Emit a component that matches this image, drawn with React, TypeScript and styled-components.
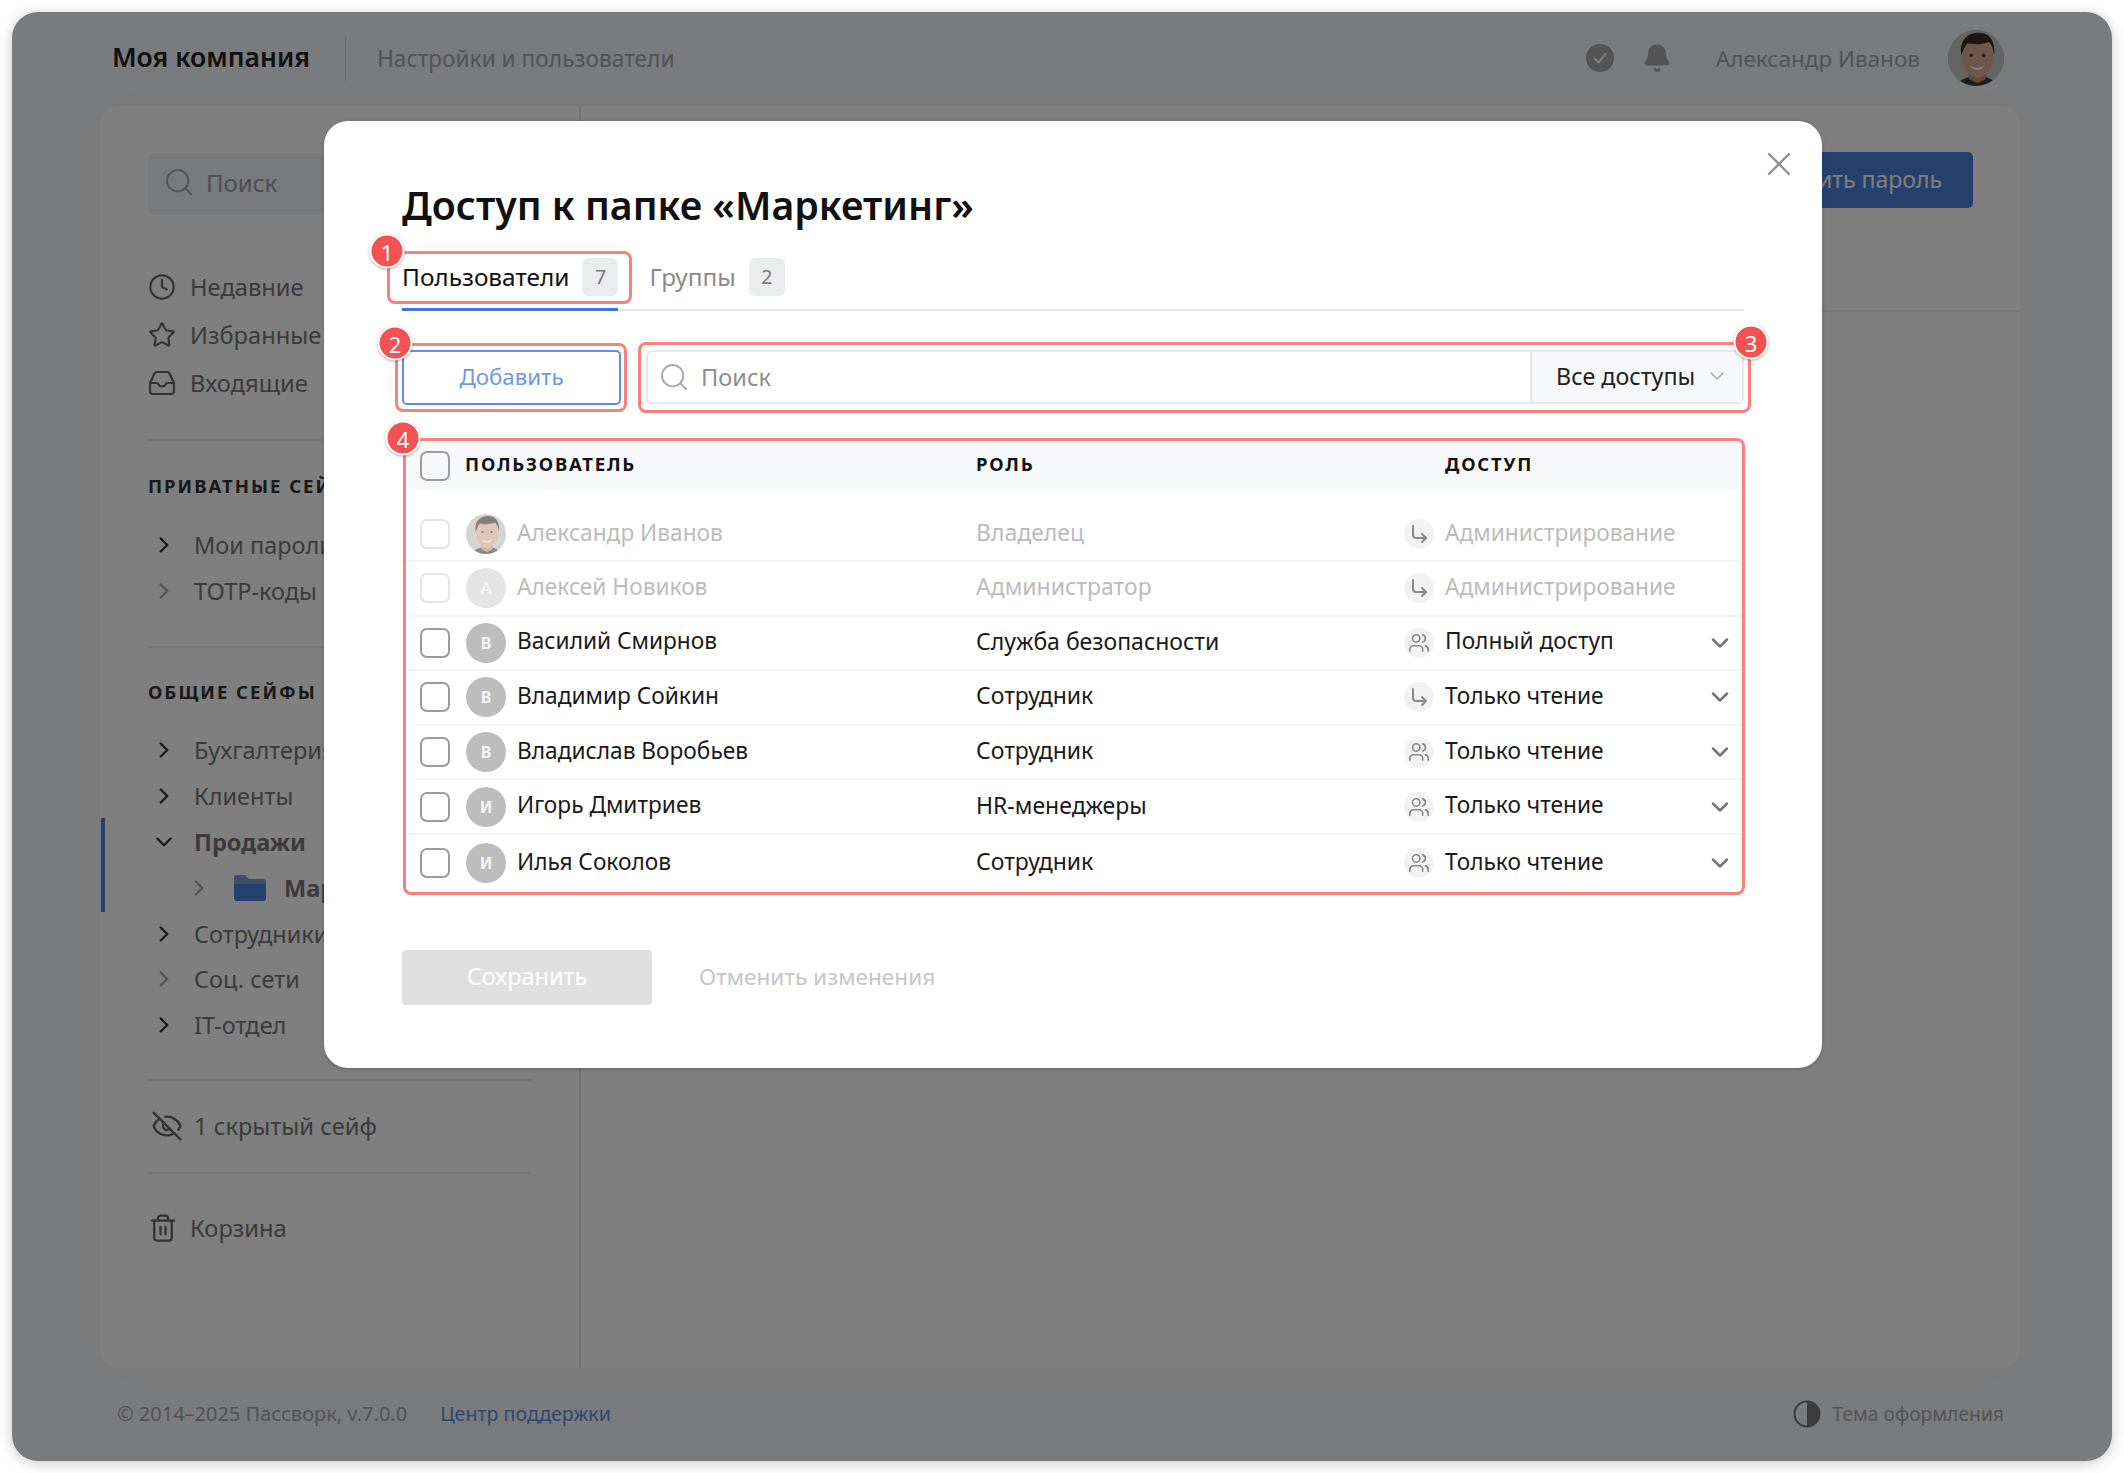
import React from 'react'
import styled, { createGlobalStyle } from 'styled-components'
import { Search, Clock, Star, ChevronRight, ChevronDown, X, Bell, Users, Trash2, EyeOff } from 'lucide-react'

const GlobalStyle = createGlobalStyle`
  html, body { margin: 0; background: #fff; }
  body { padding: 12px; width: 2124px; height: 1473px; box-sizing: border-box; overflow: hidden; font-family: "Noto Sans", "Open Sans", sans-serif; }
  * { box-sizing: border-box; }
`

const Window = styled.div`
  position: relative;
  width: 2100px;
  height: 1449px;
  border-radius: 26px;
  background: #f5f6f8;
  box-shadow: 0 2px 14px rgba(0, 0, 0, 0.22);
  overflow: hidden;
  display: flex;
  flex-direction: column;
`

const Header = styled.header`
  height: 94px;
  flex: none;
  display: flex;
  align-items: center;
  padding: 0 108px 2px 100px;
`

const Brand = styled.div`
  font-size: 26.5px;
  font-weight: 600;
  color: #222;
  padding-right: 35px;
  height: 46px;
  line-height: 45px;
  border-right: 1px solid #d8d9dc;
`

const Crumb = styled.div`
  font-size: 22.7px;
  color: #a4a6aa;
  margin-left: 31px;
  flex: 1;
`

const HeaderIcon = styled.div`
  width: 30px;
  height: 30px;
  display: flex;
  align-items: center;
  justify-content: center;
  margin-right: 27px;
`

const UserName = styled.div`
  font-size: 22.5px;
  color: #a4a6aa;
  margin: 0 28px 0 17px;
`

const Panel = styled.div`
  height: 1262px;
  flex: none;
  margin: 0 92px 0 88px;
  background: #fefefe;
  border-radius: 18px;
  display: flex;
  box-shadow: 0 0 50px rgba(0, 0, 0, 0.015);
  overflow: hidden;
`

const Sidebar = styled.aside`
  width: 481px;
  flex: none;
  padding: 47px 48px 0 48px;
  border-right: 2px solid #e4e5e7;
  position: relative;
`

const SideSearch = styled.div`
  height: 62px;
  border-radius: 6px;
  background: #f3f4f6;
  display: flex;
  align-items: center;
  padding: 0 0 4px 15px;
  gap: 11px;
  font-size: 24px;
  color: #9a9ca0;
  margin-bottom: 48px;
`

const NavItem = styled.div<{ $gap?: number; $indent?: number }>`
  height: 48px;
  display: flex;
  align-items: center;
  gap: ${(p) => p.$gap ?? 14}px;
  padding-left: ${(p) => p.$indent ?? 0}px;
  font-size: 23.7px;
  color: #777;
`

const SideDivider = styled.div<{ $top: number; $bottom: number }>`
  height: 2px;
  background: #e9eaec;
  margin: ${(p) => p.$top}px 0 ${(p) => p.$bottom}px;
`

const SectionTitle = styled.div<{ $bottom: number }>`
  font-size: 18.5px;
  line-height: 24px;
  font-weight: 700;
  letter-spacing: 2px;
  color: #333;
  white-space: nowrap;
  margin-bottom: ${(p) => p.$bottom}px;
`

const TreeRow = styled.div<{ $strong?: boolean }>`
  height: 45.8px;
  display: flex;
  align-items: center;
  font-size: 23.5px;
  white-space: nowrap;
  color: #777;
  font-weight: ${(p) => (p.$strong ? 700 : 400)};
`

const TreeChevron = styled.span<{ $muted?: boolean; $indent?: number }>`
  width: 32px;
  margin-left: ${(p) => p.$indent ?? 0}px;
  margin-right: ${(p) => (p.$indent ? 19 : 14)}px;
  flex: none;
  display: flex;
  justify-content: center;
  color: ${(p) => (p.$muted ? '#aaa' : '#333')};
`

const FolderName = styled.span`
  margin-left: 18px;
`

const ActiveBar = styled.div`
  position: absolute;
  left: 1px;
  top: 712px;
  width: 4px;
  height: 94px;
  background: #4d80dc;
`

const Main = styled.main`
  flex: 1;
`

const MainBar = styled.div`
  height: 206px;
  border-bottom: 2px solid #e9eaec;
  padding: 46px 47px 0 0;
  display: flex;
  justify-content: flex-end;
  align-items: flex-start;
`

const PrimaryButton = styled.div`
  height: 56px;
  padding: 0 31px;
  background: #4d80dc;
  border-radius: 5px;
  color: #fff;
  font-size: 23px;
  line-height: 54px;
`

const Footer = styled.footer`
  flex: 1;
  display: flex;
  align-items: center;
  padding: 0 108px 2px 105px;
  font-size: 20px;
  color: #a4a6aa;
`

const Copyright = styled.span`
  margin-right: 33px;
`

const SupportLink = styled.a`
  color: #5f8ee6;
  font-size: 19.6px;
  flex: 1;
`

const ThemeToggle = styled.div`
  display: flex;
  align-items: center;
  gap: 11px;
  font-size: 19.3px;
`

const Overlay = styled.div`
  position: absolute;
  inset: 0;
  background: rgba(0, 0, 0, 0.5);
  padding: 109px 0 0 312px;
`

const Modal = styled.div`
  position: relative;
  width: 1498px;
  height: 947px;
  background: #fff;
  border-radius: 24px;
  padding: 59px 78px 0;
  box-shadow: 0 1px 4px rgba(0, 0, 0, 0.2);
`

const CloseButton = styled.div`
  position: absolute;
  top: 23px;
  right: 23px;
  color: #8f8f8f;
  display: flex;
`

const Title = styled.h1`
  margin: 0;
  font-size: 39.3px;
  line-height: 50px;
  font-weight: 600;
  color: #111;
`

const Tabs = styled.div`
  margin-top: 28px;
  height: 53px;
  display: flex;
  gap: 31px;
  border-bottom: 2px solid #e6e7e9;
`

const Annotated = styled.div`
  position: relative;
`

const Tab = styled.div<{ $active?: boolean }>`
  height: 53px;
  padding-bottom: 13px;
  display: flex;
  align-items: center;
  gap: 13px;
  font-size: 24.4px;
  color: ${(p) => (p.$active ? '#111' : '#8b8b8b')};
  border-bottom: 3px solid ${(p) => (p.$active ? '#3f74e0' : 'transparent')};
`

const Count = styled.span`
  width: 36px;
  height: 38px;
  border-radius: 6px;
  background: #ebecee;
  color: #7a7a7a;
  font-size: 19.5px;
  display: flex;
  align-items: center;
  justify-content: center;
`

const Toolbar = styled.div`
  margin-top: 39px;
  display: flex;
  gap: 25px;
`

const AddButton = styled.div`
  width: 219px;
  height: 55px;
  border: 2px solid #5f8ee8;
  border-radius: 5px;
  color: #6c97e8;
  font-size: 22.3px;
  padding-bottom: 3px;
  display: flex;
  align-items: center;
  justify-content: center;
`

const SearchGroup = styled.div`
  flex: 1;
  position: relative;
`

const SearchField = styled.div`
  height: 54px;
  border: 2px solid #e7e8ea;
  border-radius: 6px;
  display: flex;
  align-items: center;
  overflow: hidden;
`

const SearchHint = styled.div`
  flex: 1;
  display: flex;
  align-items: center;
  gap: 11px;
  padding-left: 10px;
  font-size: 23.6px;
  color: #8e8e8e;
`

const FilterSelect = styled.div`
  width: 212px;
  height: 100%;
  flex: none;
  background: #f7f8fa;
  border-left: 2px solid #e7e8ea;
  padding: 0 0 2px 24px;
  display: flex;
  align-items: center;
  gap: 10px;
  font-size: 23.3px;
  color: #222;
`

const TableWrap = styled.div`
  position: relative;
  margin: 36px 3px 0 4px;
`

const HeadRow = styled.div`
  height: 49px;
  background: #f7f8fa;
  display: grid;
  grid-template-columns: 570px 428px 1fr;
  align-items: center;
  font-size: 18.5px;
  font-weight: 700;
  letter-spacing: 1.8px;
  color: #111;
`

const HeadUser = styled.div`
  display: flex;
  align-items: center;
  gap: 15px;
  padding-left: 14px;
`

const HeadLabel = styled.div<{ $indent?: number }>`
  padding: 0 0 5px ${(p) => p.$indent ?? 0}px;
`

const BodyRow = styled.div<{ $first?: boolean; $last?: boolean }>`
  height: ${(p) => (p.$first ? 72 : p.$last ? 57 : 54.6)}px;
  padding-top: ${(p) => (p.$first ? 18 : 0)}px;
  display: grid;
  grid-template-columns: 570px 428px 1fr;
  align-items: center;
  border-bottom: ${(p) => (p.$last ? '0' : '2px solid #f3f4f5')};
  font-size: 22.7px;
`

const UserCell = styled.div<{ $dim?: boolean }>`
  display: flex;
  align-items: center;
  padding-left: 14px;
  color: ${(p) => (p.$dim ? '#bcbcbc' : '#1a1a1a')};
`

const CellText = styled.span<{ $grow?: boolean }>`
  display: block;
  padding-bottom: 4px;
  flex: ${(p) => (p.$grow ? 1 : 'none')};
`

const Checkbox = styled.span<{ $dim?: boolean }>`
  width: 30px;
  height: 30px;
  flex: none;
  border-radius: 7px;
  border: 2px solid ${(p) => (p.$dim ? '#e5e5e5' : '#9c9c9c')};
  margin-right: 16px;
  background: #fff;
`

const HeadCheckbox = styled(Checkbox)`
  margin-right: 0;
  background: transparent;
`

const Avatar = styled.span<{ $dim?: boolean; $size?: number }>`
  width: ${(p) => p.$size ?? 40}px;
  height: ${(p) => p.$size ?? 40}px;
  flex: none;
  border-radius: 50%;
  margin-right: ${(p) => (p.$size ? 0 : 11)}px;
  background: ${(p) => (p.$dim ? '#e4e4e4' : '#bdbdbd')};
  color: #f4f4f4;
  font-size: 16px;
  font-weight: 700;
  display: flex;
  align-items: center;
  justify-content: center;
  overflow: hidden;
`

const FadedPhoto = styled.span`
  opacity: 0.55;
  display: flex;
`

const RoleCell = styled.div<{ $dim?: boolean }>`
  font-size: 23px;
  color: ${(p) => (p.$dim ? '#bcbcbc' : '#1a1a1a')};
`

const AccessCell = styled.div<{ $dim?: boolean }>`
  display: flex;
  align-items: center;
  color: ${(p) => (p.$dim ? '#bcbcbc' : '#1a1a1a')};
`

const AccessIcon = styled.span`
  width: 30px;
  height: 30px;
  flex: none;
  border-radius: 50%;
  background: #f2f2f2;
  color: #888;
  margin-right: 11px;
  display: flex;
  align-items: center;
  justify-content: center;
`

const AccessChevron = styled.span`
  color: #777;
  margin-right: 7px;
  display: flex;
`

const Actions = styled.div`
  margin-top: 58px;
  display: flex;
  align-items: center;
  gap: 47px;
`

const SaveButton = styled.div`
  width: 250px;
  height: 55px;
  border-radius: 4px;
  background: #dfdfdf;
  color: #fff;
  font-size: 23.5px;
  padding-bottom: 2px;
  display: flex;
  align-items: center;
  justify-content: center;
`

const CancelLabel = styled.div`
  font-size: 22.6px;
  padding-bottom: 2px;
  color: #c6c6c6;
`

const Frame = styled.div<{ $inset: string }>`
  position: absolute;
  inset: ${(p) => p.$inset};
  border: 3px solid #fa8080;
  border-radius: 8px;
  pointer-events: none;
`

const Pin = styled.span<{ $right?: boolean }>`
  position: absolute;
  top: -3px;
  ${(p) => (p.$right ? 'right' : 'left')}: -3px;
  transform: translate(${(p) => (p.$right ? '50%' : '-50%')}, -50%);
  width: 35px;
  height: 35px;
  border-radius: 50%;
  background: #f25252;
  border: 2px solid #fff;
  box-shadow: 0 1px 3px rgba(0, 0, 0, 0.3);
  color: #fff;
  font-size: 22px;
  display: flex;
  align-items: center;
  justify-content: center;
`

function InboxIcon() {
  return (
    <svg width="28" height="26" viewBox="0 0 28 26" fill="none" stroke="#666" strokeWidth="2.2" strokeLinejoin="round" strokeLinecap="round">
      <path d="M2 13 6.500 3.500C7 2.400 7.800 2 9 2h10c1.200 0 2 .4 2.500 1.500L26 13v8c0 1.700-1.300 3-3 3H5c-1.700 0-3-1.300-3-3z" />
      <path d="M2 13h6.500c1 0 1.500 .5 2 1.500.6 1.300 1.800 2 3.500 2s2.900-.7 3.500-2c.5-1 1-1.500 2-1.500H26" />
    </svg>
  )
}

function ThemeIcon() {
  return (
    <svg width="28" height="28" viewBox="0 0 28 28">
      <circle cx="14" cy="14" r="12.500" fill="none" stroke="#777" strokeWidth="2" />
      <path d="M14 1.500a12.500 12.500 0 0 1 0 25z" fill="#777" />
    </svg>
  )
}

function CheckBadge() {
  return (
    <svg width="28" height="28" viewBox="0 0 28 28">
      <circle cx="14" cy="14" r="14" fill="#a8a8a8" />
      <path d="M8.500 14.500 12.500 18.500 19.500 10" fill="none" stroke="#fff" strokeWidth="2" strokeLinecap="round" strokeLinejoin="round" />
    </svg>
  )
}

function FolderIcon() {
  return (
    <svg width="32" height="26" viewBox="0 0 32 26">
      <path d="M0 3a3 3 0 0 1 3-3h8l4 4h14a3 3 0 0 1 3 3v3H0z" fill="#7b9cd8" />
      <path d="M0 9h32v14a3 3 0 0 1-3 3H3a3 3 0 0 1-3-3z" fill="#4d80dc" />
    </svg>
  )
}

function InheritedIcon() {
  return (
    <svg width="20" height="20" viewBox="0 0 20 20" fill="none" stroke="currentColor" strokeWidth="2" strokeLinecap="round" strokeLinejoin="round">
      <path d="M4 2v9a3 3 0 0 0 3 3h10" />
      <path d="M13 10l4 4-4 4" />
    </svg>
  )
}

function Portrait({ size }: { size: number }) {
  return (
    <svg width={size} height={size} viewBox="0 0 40 40">
      <rect width="40" height="40" fill="#c9c9c7" />
      <path d="M7 40c1-5 7-7 14-7s12 2 13 7z" fill="#3b3a3c" />
      <path d="M15 28h12v7l-6 3-6-3z" fill="#c98f70" />
      <ellipse cx="21" cy="19.500" rx="11" ry="14.500" fill="#e0ad90" />
      <path d="M9.500 18C8 7 14 2 22 2c8 0 12 6 11 16-1-5-2-8-4-9.500-5 2-11 2-15 1-2 2-3 5-4.500 8.500z" fill="#3a2c25" />
      <circle cx="16.500" cy="18" r="1.100" fill="#2b211c" />
      <circle cx="25.500" cy="18" r="1.100" fill="#2b211c" />
      <path d="M15.500 25c2.800 2.500 8.200 2.500 11 0-2 4.800-9 4.800-11 0z" fill="#fff" />
    </svg>
  )
}

const users = [
  { name: 'Александр Иванов', role: 'Владелец', access: 'Администрирование', icon: 'arrow', dim: true, photo: true },
  { name: 'Алексей Новиков', role: 'Администратор', access: 'Администрирование', icon: 'arrow', dim: true, letter: 'А' },
  { name: 'Василий Смирнов', role: 'Служба безопасности', access: 'Полный доступ', icon: 'group', letter: 'В' },
  { name: 'Владимир Сойкин', role: 'Сотрудник', access: 'Только чтение', icon: 'arrow', letter: 'В' },
  { name: 'Владислав Воробьев', role: 'Сотрудник', access: 'Только чтение', icon: 'group', letter: 'В' },
  { name: 'Игорь Дмитриев', role: 'HR-менеджеры', access: 'Только чтение', icon: 'group', letter: 'И' },
  { name: 'Илья Соколов', role: 'Сотрудник', access: 'Только чтение', icon: 'group', letter: 'И' },
]

export default function App() {
  return (
    <>
      <GlobalStyle />
      <Window>
        <Header>
          <Brand>Моя компания</Brand>
          <Crumb>Настройки и пользователи</Crumb>
          <HeaderIcon><CheckBadge /></HeaderIcon>
          <HeaderIcon><Bell size={30} fill="#a8a8a8" color="#a8a8a8" /></HeaderIcon>
          <UserName>Александр Иванов</UserName>
          <Avatar $size={56}><Portrait size={56} /></Avatar>
        </Header>

        <Panel>
          <Sidebar>
            <ActiveBar />
            <SideSearch><Search size={32} strokeWidth={1.5} color="#a8aaae" />Поиск</SideSearch>
            <NavItem><Clock size={28} strokeWidth={1.8} color="#666" />Недавние</NavItem>
            <NavItem><Star size={28} strokeWidth={1.8} color="#666" />Избранные</NavItem>
            <NavItem><InboxIcon />Входящие</NavItem>
            <SideDivider $top={32} $bottom={33} />
            <SectionTitle $bottom={24}>ПРИВАТНЫЕ СЕЙФЫ</SectionTitle>
            <TreeRow><TreeChevron><ChevronRight size={26} strokeWidth={2.2} /></TreeChevron>Мои пароли</TreeRow>
            <TreeRow><TreeChevron $muted><ChevronRight size={26} strokeWidth={2.2} /></TreeChevron>TOTP-коды</TreeRow>
            <SideDivider $top={32} $bottom={32} />
            <SectionTitle $bottom={24}>ОБЩИЕ СЕЙФЫ</SectionTitle>
            <TreeRow><TreeChevron><ChevronRight size={26} strokeWidth={2.2} /></TreeChevron>Бухгалтерия</TreeRow>
            <TreeRow><TreeChevron><ChevronRight size={26} strokeWidth={2.2} /></TreeChevron>Клиенты</TreeRow>
            <TreeRow $strong><TreeChevron><ChevronDown size={26} strokeWidth={2.2} /></TreeChevron>Продажи</TreeRow>
            <TreeRow $strong>
              <TreeChevron $muted $indent={35}><ChevronRight size={26} strokeWidth={2.2} /></TreeChevron>
              <FolderIcon />
              <FolderName>Маркетинг</FolderName>
            </TreeRow>
            <TreeRow><TreeChevron><ChevronRight size={26} strokeWidth={2.2} /></TreeChevron>Сотрудники</TreeRow>
            <TreeRow><TreeChevron $muted><ChevronRight size={26} strokeWidth={2.2} /></TreeChevron>Соц. сети</TreeRow>
            <TreeRow><TreeChevron><ChevronRight size={26} strokeWidth={2.2} /></TreeChevron>IT-отдел</TreeRow>
            <SideDivider $top={31} $bottom={21} />
            <NavItem $indent={3} $gap={11}><EyeOff size={32} strokeWidth={1.8} color="#666" />1 скрытый сейф</NavItem>
            <SideDivider $top={22} $bottom={30} />
            <NavItem $gap={12}><Trash2 size={30} strokeWidth={1.8} color="#666" />Корзина</NavItem>
          </Sidebar>
          <Main>
            <MainBar><PrimaryButton>Добавить пароль</PrimaryButton></MainBar>
          </Main>
        </Panel>

        <Footer>
          <Copyright>© 2014–2025 Пассворк, v.7.0.0</Copyright>
          <SupportLink>Центр поддержки</SupportLink>
          <ThemeToggle><ThemeIcon />Тема оформления</ThemeToggle>
        </Footer>

        <Overlay>
          <Modal>
            <CloseButton><X size={40} strokeWidth={1.4} /></CloseButton>
            <Title>Доступ к папке «Маркетинг»</Title>

            <Tabs>
              <Annotated>
                <Tab $active>Пользователи<Count>7</Count></Tab>
                <Frame $inset="-7px -14px 5px -15px"><Pin>1</Pin></Frame>
              </Annotated>
              <Tab>Группы<Count>2</Count></Tab>
            </Tabs>

            <Toolbar>
              <Annotated>
                <AddButton>Добавить</AddButton>
                <Frame $inset="-7px -6px -7px -7px"><Pin>2</Pin></Frame>
              </Annotated>
              <SearchGroup>
                <SearchField>
                  <SearchHint><Search size={32} strokeWidth={1.4} color="#a8a8a8" />Поиск</SearchHint>
                  <FilterSelect>Все доступы<ChevronDown size={24} strokeWidth={1.5} color="#aaa" /></FilterSelect>
                </SearchField>
                <Frame $inset="-8px -7px -8px -8px"><Pin $right>3</Pin></Frame>
              </SearchGroup>
            </Toolbar>

            <TableWrap>
              <HeadRow>
                <HeadUser><HeadCheckbox /><HeadLabel>ПОЛЬЗОВАТЕЛЬ</HeadLabel></HeadUser>
                <HeadLabel>РОЛЬ</HeadLabel>
                <HeadLabel $indent={41}>ДОСТУП</HeadLabel>
              </HeadRow>
              {users.map((u, i) => (
                <BodyRow key={u.name} $first={i === 0} $last={i === users.length - 1}>
                  <UserCell $dim={u.dim}>
                    <Checkbox $dim={u.dim} />
                    <Avatar $dim={u.dim}>
                      {u.photo ? <FadedPhoto><Portrait size={40} /></FadedPhoto> : u.letter}
                    </Avatar>
                    <CellText>{u.name}</CellText>
                  </UserCell>
                  <RoleCell $dim={u.dim}><CellText>{u.role}</CellText></RoleCell>
                  <AccessCell $dim={u.dim}>
                    <AccessIcon>
                      {u.icon === 'arrow' ? <InheritedIcon /> : <Users size={22} strokeWidth={1.8} />}
                    </AccessIcon>
                    <CellText $grow>{u.access}</CellText>
                    {!u.dim && <AccessChevron><ChevronDown size={28} strokeWidth={2.2} /></AccessChevron>}
                  </AccessCell>
                </BodyRow>
              ))}
              <Frame $inset="-3px -4px -3px -3px"><Pin>4</Pin></Frame>
            </TableWrap>

            <Actions>
              <SaveButton>Сохранить</SaveButton>
              <CancelLabel>Отменить изменения</CancelLabel>
            </Actions>
          </Modal>
        </Overlay>
      </Window>
    </>
  )
}
